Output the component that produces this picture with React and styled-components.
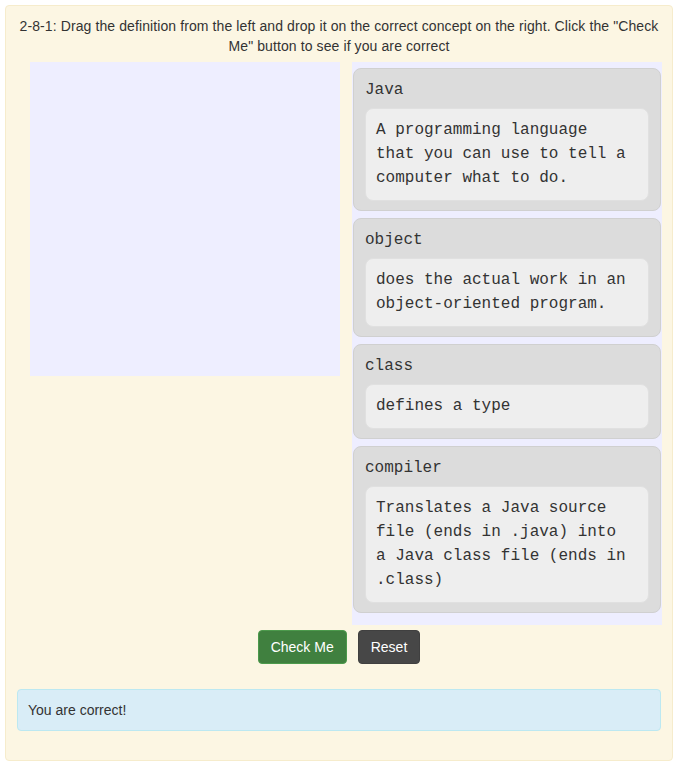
import React from 'react';
import styled, { createGlobalStyle } from 'styled-components';

const GlobalStyle = createGlobalStyle`
  body {
    margin: 0;
    background: #fff;
    font-family: "Liberation Sans", Arial, sans-serif;
    color: #333;
  }
`;

const Page = styled.div`
  padding: 5px 7px 7px 5px;
`;

const Card = styled.div`
  background: #fcf6e3;
  border: 1px solid #f6eccc;
  border-radius: 4px;
  padding: 10px 0 29px;
`;

const Prompt = styled.p`
  margin: 0 8px 6px;
  font-size: 14px;
  line-height: 20px;
  letter-spacing: 0.1px;
  text-align: center;
`;

const Columns = styled.div`
  display: flex;
  align-items: flex-start;
  gap: 12px;
  padding-left: 24px;
`;

const DropZone = styled.div`
  width: 310px;
  height: 314px;
  background: #eeeeff;
`;

const ConceptList = styled.div`
  width: 310px;
  box-sizing: border-box;
  background: #eeeeff;
  padding: 6px 1px 12px;
  display: flex;
  flex-direction: column;
  gap: 7px;
`;

const Concept = styled.div`
  background: #dcdcdc;
  border: 1px solid #d0d0d0;
  border-radius: 8px;
  padding: 9px 11px 9px 11px;
  font-family: "Liberation Mono", "Courier New", monospace;
  font-size: 16px;
  line-height: 24px;
  color: #333;
`;

const Term = styled.div`
  margin-bottom: 6px;
`;

const Definition = styled.div`
  background: #eeeeee;
  border: 1px solid #e0e0e0;
  border-radius: 8px;
  padding: 9px 18px 10px 10px;
`;

const Actions = styled.div`
  display: flex;
  justify-content: center;
  gap: 11px;
  margin-top: 5px;
`;

const Button = styled.button`
  font-family: "Liberation Sans", Arial, sans-serif;
  font-size: 14px;
  line-height: 20px;
  padding: 6px 12px;
  color: #fff;
  border-radius: 4px;
  border: 1px solid ${(p) => (p.$variant === 'success' ? '#4c9a4c' : '#404040')};
  background: ${(p) => (p.$variant === 'success' ? '#40803f' : '#474747')};
  cursor: pointer;
`;

const Feedback = styled.div`
  margin: 25px 11px 0 11px;
  padding: 10px 10px;
  background: #d9edf7;
  border: 1px solid #bce8f1;
  border-radius: 4px;
  font-size: 14px;
  line-height: 20px;
  color: #333;
`;

const concepts = [
  { term: 'Java', definition: 'A programming language that you can use to tell a computer what to do.' },
  { term: 'object', definition: 'does the actual work in an object-oriented program.' },
  { term: 'class', definition: 'defines a type' },
  { term: 'compiler', definition: 'Translates a Java source file (ends in .java) into a Java class file (ends in .class)' },
];

const App = () => (
  <Page>
    <GlobalStyle />
    <Card>
      <Prompt>
        2-8-1: Drag the definition from the left and drop it on the correct concept on the right. Click the "Check Me" button to see if you are correct
      </Prompt>
      <Columns>
        <DropZone />
        <ConceptList>
          {concepts.map((c) => (
            <Concept key={c.term}>
              <Term>{c.term}</Term>
              <Definition>{c.definition}</Definition>
            </Concept>
          ))}
        </ConceptList>
      </Columns>
      <Actions>
        <Button $variant="success">Check Me</Button>
        <Button>Reset</Button>
      </Actions>
      <Feedback>You are correct!</Feedback>
    </Card>
  </Page>
);

export default App;
